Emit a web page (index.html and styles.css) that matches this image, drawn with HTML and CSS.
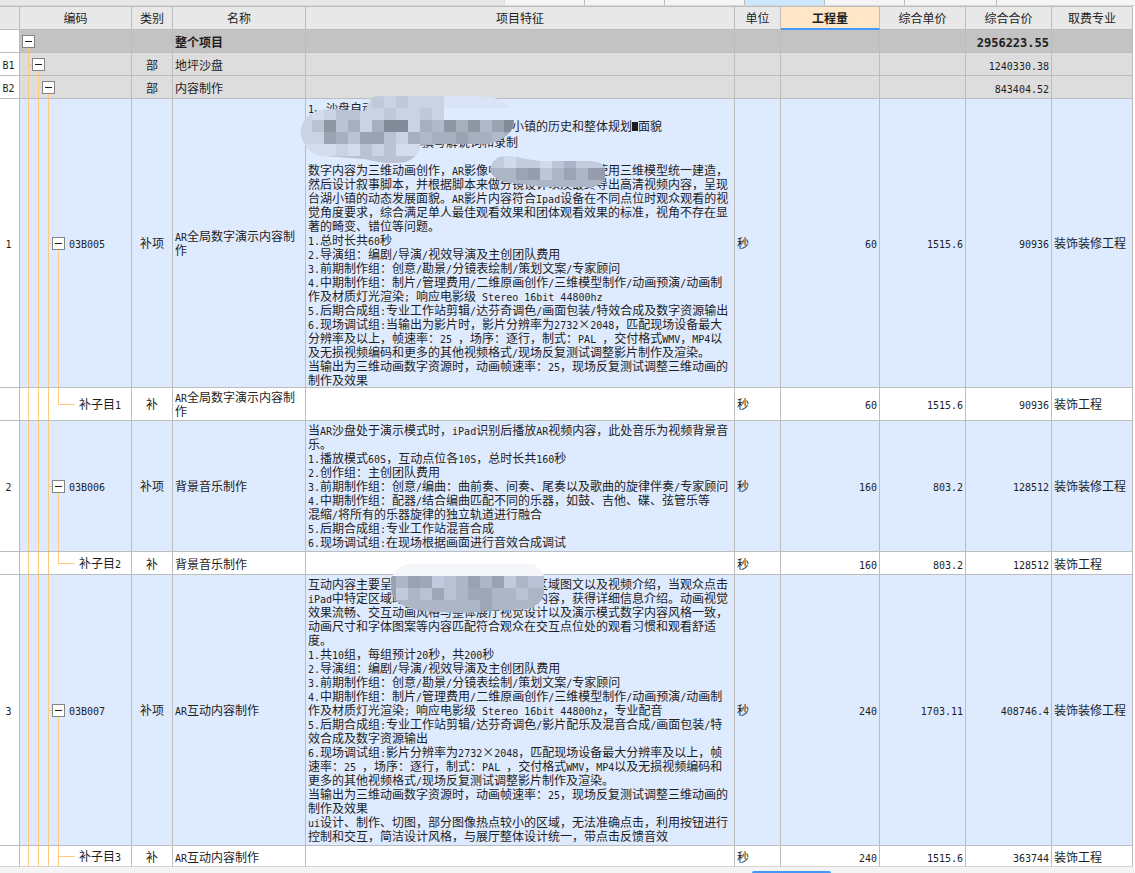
FILE: index.html
```html
<!DOCTYPE html>
<html lang="zh-CN">
<head>
<meta charset="utf-8">
<title>工程量清单</title>
<link rel="stylesheet" href="styles.css">
</head>
<body>
<div class="tabs"><span class="tab"></span><span class="tab"></span><span class="tab"></span><span class="tab active"></span><span class="tab"></span><span class="tab wide"></span><span class="tab rest"></span></div>
<main class="sheet">
<table class="grid">
<colgroup><col class="c-no"><col class="c-code"><col class="c-kind"><col class="c-name"><col class="c-desc"><col class="c-unit"><col class="c-qty"><col class="c-price"><col class="c-total"><col class="c-fee"></colgroup>
<thead>
<tr><th></th><th>编码</th><th>类别</th><th>名称</th><th>项目特征</th><th>单位</th><th class="picked">工程量</th><th>综合单价</th><th>综合合价</th><th>取费专业</th></tr>
</thead>
<tbody>
<tr class="root r-line"><td class="no"></td><td class="tree t0"><div class="node"><button class="fold" aria-label="折叠 整个项目"></button></div></td><td></td><td>整个项目</td><td></td><td></td><td></td><td></td><td class="num">2956223.55</td><td></td></tr>
<tr class="group r-line"><td class="no">B1</td><td class="tree t1"><div class="node"><button class="fold" aria-label="折叠 地坪沙盘"></button></div></td><td class="mid">部</td><td>地坪沙盘</td><td></td><td></td><td></td><td></td><td class="num">1240330.38</td><td></td></tr>
<tr class="group r-line"><td class="no">B2</td><td class="tree t2"><div class="node"><button class="fold" aria-label="折叠 内容制作"></button></div></td><td class="mid">部</td><td>内容制作</td><td></td><td></td><td></td><td></td><td class="num">843404.52</td><td></td></tr>
<tr class="item"><td class="no">1</td><td class="tree t3"><div class="node"><button class="fold" aria-label="折叠 03B005"></button><span>03B005</span></div></td><td class="mid">补项</td><td>AR全局数字演示内容制作</td>
<td class="desc"><div class="loose">1、沙盘自动</div><div class="loose"><span class="gap g-17"></span>小镇的历史和整体规划<span class="block"></span>面貌</div><div><span class="gap g-9"></span>撰写解说词和录制</div><br>数字内容为三维动画创作，AR影像中<span class="gap g-8"></span>使用三维模型统一建造，<br>然后设计叙事脚本，并根据脚本来做分镜设计以及最终导出高清视频内容，呈现<br>台湖小镇的动态发展面貌。AR影片内容符合Ipad设备在不同点位时观众观看的视<br>觉角度要求，综合满足单人最佳观看效果和团体观看效果的标准，视角不存在显<br>著的畸变、错位等问题。<br>1.总时长共60秒<br>2.导演组：编剧/导演/视效导演及主创团队费用<br>3.前期制作组：创意/勘景/分镜表绘制/策划文案/专家顾问<br>4.中期制作组：制片/管理费用/二维原画创作/三维模型制作/动画预演/动画制<br>作及材质灯光渲染; 响应电影级 Stereo 16bit 44800hz<br>5.后期合成组:专业工作站剪辑/达芬奇调色/画面包装/特效合成及数字资源输出<br>6.现场调试组:当输出为影片时，影片分辨率为2732<span class="full">×</span>2048，匹配现场设备最大<br>分辨率及以上，帧速率：25 ，场序：逐行，制式：PAL ，交付格式WMV，MP4以<br>及无损视频编码和更多的其他视频格式/现场反复测试调整影片制作及渲染。<br>当输出为三维动画数字资源时，动画帧速率：25，现场反复测试调整三维动画的<br>制作及效果
<svg class="mask m-a" width="220" height="68" viewBox="300 96 220 68" aria-hidden="true"><defs><clipPath id="ma"><path d="M372 97Q380 96 390 96H480Q502 97 510 108V120H514Q514 132 503 138Q494 144 480 144H436L420 146Q418 158 405 162Q388 165 365 159L325 156Q310 155 304 143Q297 133 304 121Q310 110 330 109L366 111Q368 101 372 97Z"/></clipPath></defs><g clip-path="url(#ma)" shape-rendering="crispEdges"><path fill="#c9d3e4" d="M300 96h220v68H300z"/><path fill="#bfc9da" d="M372 96h12v12h-12zM396 96h12v12h-12zM384 108h12v12h-12zM420 108h12v12h-12z"/><path fill="#dae4f6" d="M444 96h76v12h-76z"/><path fill="#deeafe" d="M444 108h76v12h-76z"/><path fill="#bac3d4" d="M336 108h24v12h-24zM312 120h12v12h-12zM336 120h12v12h-12zM348 132h12v12h-12zM384 132h12v12h-12z"/><path fill="#8e95a3" d="M324 120h12v12h-12zM444 120h12v12h-12zM468 120h12v12h-12z"/><path fill="#a7afbe" d="M348 120h12v12h-12zM372 120h12v12h-12zM420 120h12v12h-12zM456 120h12v12h-12zM336 132h12v12h-12zM408 132h106v14h-106z"/><path fill="#838a98" d="M384 120h24v12h-24zM504 120h10v12h-10z"/><path fill="#b0b9ca" d="M432 120h12v12h-12zM480 120h12v12h-12zM420 132h12v12h-12zM492 132h12v12h-12z"/><path fill="#9ba3b2" d="M492 120h12v12h-12zM324 132h12v12h-12zM360 132h24v12h-24zM456 132h12v12h-12z"/><path fill="#b9c3d3" d="M360 144h12v12h-12zM384 144h12v12h-12zM300 156h120v8H300z"/><path fill="#d2dced" d="M300 144h36v12h-36zM348 144h12v12h-12zM396 144h24v12h-24zM312 108h12v12h-12z"/></g></svg>
<svg class="mask m-b" width="116" height="32" viewBox="489 156 116 32" aria-hidden="true"><defs><clipPath id="mb"><path d="M499 157Q513 155 526 159L540 161H592Q605 162 605 171V179Q601 187 588 187H544L529 185L504 182Q490 177 490 169Q491 161 499 157Z"/></clipPath></defs><g clip-path="url(#mb)" shape-rendering="crispEdges"><path fill="#c2ccdd" d="M489 156h116v12H489z"/><path fill="#adb6c7" d="M489 168h116v20H489z"/><path fill="#d0daeb" d="M504 156h12v12h-12zM540 156h12v12h-12z"/><path fill="#9ba4b4" d="M516 168h12v12h-12zM564 168h12v12h-12z"/><path fill="#959dac" d="M528 168h12v12h-12zM588 168h17v12h-17z"/><path fill="#bbc6d8" d="M540 168h12v12h-12zM552 156h12v12h-12z"/><path fill="#aab4c6" d="M564 156h12v12h-12z"/></g></svg>
</td><td>秒</td><td class="num">60</td><td class="num">1515.6</td><td class="num">90936</td><td>装饰装修工程</td></tr>
<tr class="r-two"><td class="no"></td><td class="tree leaf"><div class="node"><span>补子目1</span></div></td><td class="mid">补</td><td>AR全局数字演示内容制作</td><td></td><td>秒</td><td class="num">60</td><td class="num">1515.6</td><td class="num">90936</td><td>装饰工程</td></tr>
<tr class="item"><td class="no">2</td><td class="tree t3"><div class="node"><button class="fold" aria-label="折叠 03B006"></button><span>03B006</span></div></td><td class="mid">补项</td><td>背景音乐制作</td>
<td class="desc pad">当AR沙盘处于演示模式时，iPad识别后播放AR视频内容，此处音乐为视频背景音<br>乐。<br>1.播放模式60S，互动点位各10S，总时长共160秒<br>2.创作组：主创团队费用<br>3.前期制作组：创意/编曲：曲前奏、间奏、尾奏以及歌曲的旋律伴奏/专家顾问<br>4.中期制作组：配器/结合编曲匹配不同的乐器，如鼓、吉他、碟、弦管乐等<br>混缩/将所有的乐器旋律的独立轨道进行融合<br>5.后期合成组:专业工作站混音合成<br>6.现场调试组:在现场根据画面进行音效合成调试</td><td>秒</td><td class="num">160</td><td class="num">803.2</td><td class="num">128512</td><td>装饰装修工程</td></tr>
<tr class="r-line"><td class="no"></td><td class="tree leaf"><div class="node"><span>补子目2</span></div></td><td class="mid">补</td><td>背景音乐制作</td><td></td><td>秒</td><td class="num">160</td><td class="num">803.2</td><td class="num">128512</td><td>装饰工程</td></tr>
<tr class="item"><td class="no">3</td><td class="tree t3"><div class="node"><button class="fold" aria-label="折叠 03B007"></button><span>03B007</span></div></td><td class="mid">补项</td><td>AR互动内容制作</td>
<td class="desc pad">互动内容主要呈<span class="gap g-12"></span>区域图文以及视频介绍，当观众点击<br>iPad中特定区域时<span class="gap g-11"></span>内容，获得详细信息介绍。动画视觉<br>效果流畅、交互动画风格与整体展厅视觉设计以及演示模式数字内容风格一致，<br>动画尺寸和字体图案等内容匹配符合观众在交互点位处的观看习惯和观看舒适<br>度。<br>1.共10组，每组预计20秒，共200秒<br>2.导演组：编剧/导演/视效导演及主创团队费用<br>3.前期制作组：创意/勘景/分镜表绘制/策划文案/专家顾问<br>4.中期制作组：制片/管理费用/二维原画创作/三维模型制作/动画预演/动画制<br>作及材质灯光渲染; 响应电影级 Stereo 16bit 44800hz，专业配音<br>5.后期合成组:专业工作站剪辑/达芬奇调色/影片配乐及混音合成/画面包装/特<br>效合成及数字资源输出<br>6.现场调试组:影片分辨率为2732<span class="full">×</span>2048，匹配现场设备最大分辨率及以上，帧<br>速率：25 ，场序：逐行，制式：PAL ，交付格式WMV，MP4以及无损视频编码和<br>更多的其他视频格式/现场反复测试调整影片制作及渲染。<br>当输出为三维动画数字资源时，动画帧速率：25，现场反复测试调整三维动画的<br>制作及效果<br>ui设计、制作、切图，部分图像热点较小的区域，无法准确点击，利用按钮进行<br>控制和交互，简洁设计风格，与展厅整体设计统一，带点击反馈音效
<svg class="mask m-c" width="154" height="50" viewBox="391 564 154 50" aria-hidden="true"><defs><clipPath id="mc"><path d="M406 564H532Q541 567 544 576V594Q541 605 528 609L487 611Q470 614 435 612Q405 610 395 600Q391 594 391 585V578Q397 567 406 564Z"/></clipPath></defs><g clip-path="url(#mc)" shape-rendering="crispEdges"><path fill="#f5f6f9" d="M391 564h154v12H391z"/><path fill="#adb6c6" d="M391 576h154v38H391z"/><path fill="#9aa2b2" d="M391 576h5v24h-5zM408 576h12v12h-12zM468 576h12v12h-12zM492 576h12v12h-12z"/><path fill="#9fa7b6" d="M420 576h12v12h-12zM468 588h24v12h-24zM480 600h12v12h-12zM432 588h12v12h-12z"/><path fill="#c1cadd" d="M432 576h12v12h-12zM396 588h12v12h-12zM504 576h12v12h-12z"/><path fill="#b8c2d4" d="M444 576h12v24h-12zM420 588h12v12h-12zM516 588h12v12h-12zM528 576h16v12h-16z"/></g></svg>
</td><td>秒</td><td class="num">240</td><td class="num">1703.11</td><td class="num">408746.4</td><td>装饰装修工程</td></tr>
<tr class="last"><td class="no"></td><td class="tree leaf more"><div class="node"><span>补子目3</span></div></td><td class="mid">补</td><td>AR互动内容制作</td><td></td><td>秒</td><td class="num">240</td><td class="num">1515.6</td><td class="num">363744</td><td>装饰工程</td></tr>
</tbody>
</table>
</main>
<footer class="foot"><span class="indicator"></span></footer>
<script src="latin.js"></script>
</body>
</html>
```
FILE: styles.css
```css
* { box-sizing: border-box; }

body {
  margin: 0;
  background: #f4f4f4;
  color: #1e1e1e;
  font: 12px/14px "Noto Sans CJK SC", sans-serif;
  text-spacing-trim: space-all;
}

.latin {
  font-family: "DejaVu Sans Mono", monospace;
  font-size: 10px;
  line-height: 1px;
}
.root .latin { font-size: 12px; }

/* Strip of tabs above the sheet */
.tabs {
  display: flex;
  justify-content: flex-end;
  height: 5px;
  background: #e8e8e8;
}
.tab {
  width: 80px;
  background: #f5f5f5;
  border-left: 1px solid #bdbdbd;
}
.tab.active { background: #cce8ff; }
.tab.wide { width: 92px; }
.tab.rest { width: 139px; }
.tab:first-child { border-color: #e0e0e0; }

/* Sheet */
.sheet {
  padding-right: 2px;
  border-top: 1px solid #d6d6d6;
  background: #fff;
}
.grid {
  width: 100%;
  table-layout: fixed;
  border-collapse: separate;
  border-spacing: 0;
  border-top: 1px solid #bdbdbd;
}
.c-no { width: 20px; }
.c-code { width: 112px; }
.c-kind { width: 41px; }
.c-name { width: 133px; }
.c-unit { width: 46px; }
.c-qty { width: 99px; }
.c-price, .c-total { width: 86px; }
.c-fee { width: 81px; }

th, td {
  padding: 0 2px;
  border-right: 1px solid #bdbdbd;
  border-bottom: 1px solid #bdbdbd;
  text-align: left;
  vertical-align: middle;
}
th {
  height: 23px;
  background: #e8e8e8;
  text-align: center;
  font-weight: 400;
}
th.picked {
  background: #ffe6c6;
  border-bottom: 2px solid #4499f7;
  font-weight: 700;
}
.r-line td { height: 23px; padding-top: 1px; }
.r-two td { height: 33px; }
.item .desc.pad { height: 131px; }
.last td { height: 21px; padding-top: 2px; border-bottom-color: #d6d6d6; }

.root td { background-color: #c3c3c3; font-weight: 700; }
.group td { background-color: #dddddd; }
.item td { background-color: #deeafe; }
.grid td.no { padding: 0 2px 0 0; background: #fff; text-align: center; }
.mid { text-align: center; }
.num { text-align: right; }

/* Code tree: guide lines are drawn as 1px backgrounds */
.grid td.tree {
  --g: linear-gradient(#ffca80, #ffca80);
  padding: 0;
  background-repeat: no-repeat;
}
.node { display: flex; align-items: center; gap: 4px; }
.t0 .node { padding-left: 2px; }
.t1 .node { padding-left: 12px; }
.t2 .node { padding-left: 22px; }
.t3 .node { padding-left: 32px; }
.leaf .node { padding-left: 59px; }
.t0 {
  background-image: var(--g);
  background-size: 1px 50%;
  background-position: 8px 100%;
}
.t1 {
  background-image: var(--g), var(--g), var(--g);
  background-size: 1px 100%, 1px 50%, 6px 1px;
  background-position: 8px 0, 18px 100%, 8px 50%;
}
.t2 {
  background-image: var(--g), var(--g), var(--g), var(--g);
  background-size: 1px 100%, 1px 100%, 1px 50%, 6px 1px;
  background-position: 8px 0, 18px 0, 28px 100%, 18px 50%;
}
.t3, .leaf {
  background-image: var(--g), var(--g), var(--g), var(--g), var(--g);
  background-size: 1px 100%, 1px 100%, 1px 100%, 1px 50%, 6px 1px;
  background-position: 8px 0, 18px 0, 28px 0, 38px 100%, 28px 50%;
}
.leaf {
  background-size: 1px 100%, 1px 100%, 1px 100%, 1px 50%, 17px 1px;
  background-position: 8px 0, 18px 0, 28px 0, 38px 0, 38px 50%;
}
.leaf.more {
  background-size: 1px 100%, 1px 100%, 1px 100%, 1px 100%, 17px 1px;
}
.fold {
  display: grid;
  place-items: center;
  width: 13px;
  height: 13px;
  padding: 0;
  border: 1px solid #848484;
  border-radius: 0;
  background: #fff;
}
.fold::before {
  content: "";
  width: 7px;
  height: 1px;
  background: #1e1e1e;
}

/* Long descriptions */
.desc { position: relative; white-space: nowrap; }
.desc.pad { padding-bottom: 1px; padding-top: 1px; }
tr:nth-last-child(2) .desc.pad { height: 271px; }
.loose { line-height: 18px; }
.gap { display: inline-block; }
.g-8 { width: 96px; }
.g-9 { width: 114px; }
.g-11 { width: 132px; }
.g-12 { width: 144px; }
.g-17 { width: 204px; }
.full { display: inline-block; width: 12px; text-align: center; }
.block {
  display: inline-block;
  width: 6px;
  height: 9px;
  background: #1e1e1e;
}

/* Pixelated cover patches */
.mask { position: absolute; }
.m-a { left: -6px; top: -3px; }
.m-b { left: 183px; top: 57px; }
.m-c { left: 85px; top: -11px; }

.foot {
  display: flex;
  align-items: flex-end;
  justify-content: flex-end;
  height: 6px;
  padding-right: 304px;
}
.indicator {
  width: 79px;
  height: 2px;
  border-radius: 2px 2px 0 0;
  background: #4499f7;
}
```
FILE: latin.js
```js
// Wrap half-width runs so they take exactly half an ideograph per character.
const walker = document.createTreeWalker(document.querySelector(".grid"), NodeFilter.SHOW_TEXT);
const nodes = [];
while (walker.nextNode()) {
  if (walker.currentNode.nodeValue.trim()) nodes.push(walker.currentNode);
}
for (const node of nodes) {
  const parts = node.nodeValue.trimEnd().split(/([\x20-\x7e]+)/);
  const out = document.createDocumentFragment();
  for (const part of parts) {
    if (/^[\x20-\x7e]+$/.test(part)) {
      const run = document.createElement("span");
      run.className = "latin";
      run.textContent = part;
      out.append(run);
    } else if (part) {
      out.append(part);
    }
  }
  node.replaceWith(out);
}
```
